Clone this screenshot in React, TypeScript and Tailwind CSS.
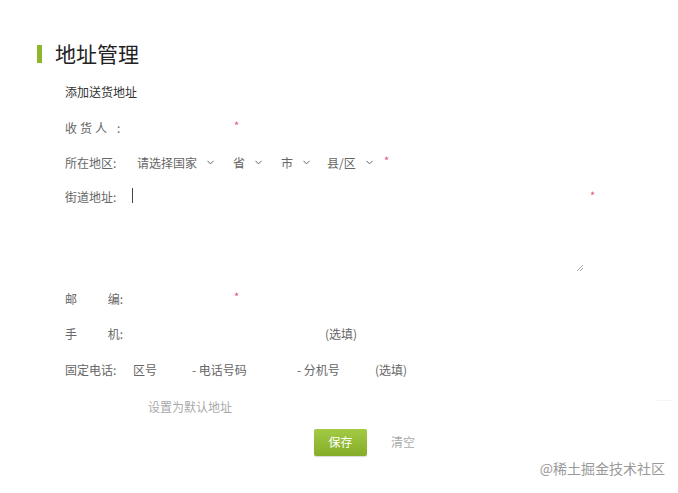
import { ChevronDown } from 'lucide-react';

const font = { fontFamily: '"Noto Sans CJK SC", "Noto Sans", sans-serif' };

function Star({ className = '' }: { className?: string }) {
  return <span className={`text-[11px] leading-none text-[#e0557a] ${className}`}>*</span>;
}

function Pick({ label, width }: { label: string; width: string }) {
  return (
    <span className={`flex items-center ${width}`}>
      <span>{label}</span>
      <ChevronDown className="ml-[8px] h-[11px] w-[11px] text-[#555]" strokeWidth={2} />
    </span>
  );
}

export default function App() {
  return (
    <div className="relative h-[493px] w-[678px] overflow-hidden bg-white text-[12px] text-[#666]" style={font}>
      <div className="ml-[37px] mt-[41px] flex h-[26px] items-center">
        <span className="h-[18px] w-[5px] bg-[#8db62c]" />
        <h1 className="ml-[13px] text-[21px] font-normal text-[#222]">地址管理</h1>
      </div>

      <div className="ml-[65px] mt-[15px] flex h-[20px] items-center text-[#333]">添加送货地址</div>

      <div className="ml-[65px] mt-[8px] flex flex-col">
        <div className="flex h-[35px] items-center">
          <span className="flex w-[68px]">
            <span className="tracking-[3px]">收货人</span>
            <span className="ml-[7px]">:</span>
          </span>
          <Star className="ml-[101px] -mt-[4px]" />
        </div>

        <div className="flex h-[35px] items-center">
          <span className="w-[72px]">所在地区:</span>
          <Pick label="请选择国家" width="w-[96px]" />
          <Pick label="省" width="w-[48px]" />
          <Pick label="市" width="w-[46px]" />
          <Pick label="县/区" width="w-[57px]" />
          <Star className="-mt-[4px]" />
        </div>

        <div className="flex h-[101px] items-start pt-[8px]">
          <span className="w-[67px]">街道地址:</span>
          <div className="relative h-[84px] w-[452px]">
            <span className="absolute left-0 top-[0px] h-[15px] w-px bg-[#444]" />
            <svg className="absolute bottom-0 right-0" width="8" height="8" viewBox="0 0 8 8">
              <path d="M7 1L1 7M7 4L4 7" stroke="#aaa" strokeWidth="1" />
            </svg>
          </div>
          <Star className="ml-[6px] mt-[2px]" />
        </div>

        <div className="flex h-[35px] items-center">
          <span className="flex w-[58px] justify-between">
            <span>邮</span>
            <span>编:</span>
          </span>
          <Star className="ml-[111px] -mt-[4px]" />
        </div>

        <div className="flex h-[35px] items-center">
          <span className="flex w-[58px] justify-between">
            <span>手</span>
            <span>机:</span>
          </span>
          <span className="ml-[202px]">(选填)</span>
        </div>

        <div className="flex h-[38px] items-center">
          <span className="w-[68px]">固定电话:</span>
          <span className="w-[59px]">区号</span>
          <span className="w-[105px]">- 电话号码</span>
          <span className="w-[78px]">- 分机号</span>
          <span>(选填)</span>
        </div>

        <div className="flex h-[35px] items-center pl-[83px] text-[#aaa]">设置为默认地址</div>

        <div className="flex h-[36px] items-center pl-[249px]">
          <button className="h-[27px] w-[53px] rounded-[2px] bg-gradient-to-b from-[#a3ca43] to-[#86ad29] text-[12px] text-white shadow-[0_1px_1px_rgba(0,0,0,0.15)]">
            保存
          </button>
          <span className="ml-[24px] text-[#aaa]">清空</span>
        </div>
      </div>

      <span className="absolute right-[6px] top-[394px] text-[6px] text-[#e6e6e6]">..........</span>

      <div className="absolute bottom-[14px] right-[13px] text-[14px] text-[#9a9a9a]">@稀土掘金技术社区</div>
    </div>
  );
}
